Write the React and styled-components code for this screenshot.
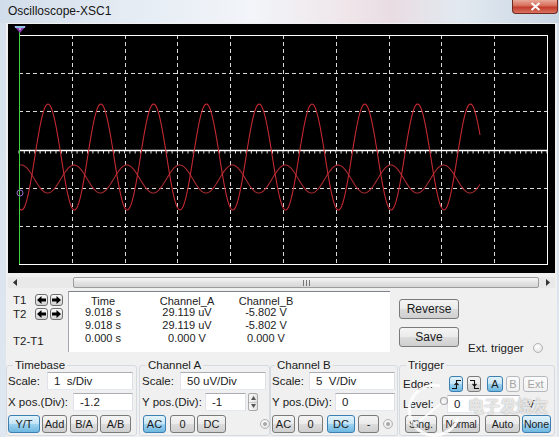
import React from 'react';
import styled, { createGlobalStyle } from 'styled-components';

const Global = createGlobalStyle`
  html, body { margin:0; padding:0; background:#fff; }
  * { box-sizing:border-box; }
`;

const Window = styled.div`
  width:559px; height:444px; background:#fff; overflow:hidden;
  font-family:'Liberation Sans', Arial, sans-serif; color:#1b1b1b; font-size:11.5px;
`;
const Frame = styled.div`
  height:437px; display:flex; flex-direction:column;
  background:linear-gradient(180deg,#d6e1ed 0%,#dfe7f0 100%);
`;
const TitleBar = styled.div`
  height:23px; flex:none; display:flex; align-items:flex-start; justify-content:space-between;
  padding-left:8px;
  background:linear-gradient(90deg,#d1ddea 0%,#e4ebf3 22%,#f2f5f9 45%,#efe6ea 62%,#e9dde3 70%,#e2e9f0 82%,#c9d6e3 100%);
`;
const Title = styled.span` font-size:12px; line-height:22px; color:#151515; `;
const Close = styled.div`
  width:46px; height:14px; margin-right:1px; display:grid; place-items:center;
  border:1px solid #6d2b22; border-top:none; border-radius:0 0 4px 4px;
  background:linear-gradient(#e9a898 0%,#d66c58 45%,#c23b2b 55%,#d9735f 100%);
`;
const Body = styled.div` flex:1; display:flex; padding:0 2px 0 6px; min-height:0; `;
const Panel = styled.div` flex:1; background:#f0f0f0; display:flex; flex-direction:column; min-width:0; `;
const Screen = styled.div` height:249px; margin:1px 2px 0; background:#000; flex:none; line-height:0; `;

const Scroll = styled.div`
  height:11px; margin:4px 2px 0; flex:none; display:flex; align-items:stretch;
  background:#e9e9e9;
`;
const ScrollArrow = styled.div` width:14px; display:grid; place-items:center; `;
const Track = styled.div` flex:1; display:flex; `;
const Thumb = styled.div`
  flex:1; margin:0 2px 0 51px; display:grid; place-items:center;
  border:1px solid #9c9c9c; border-radius:2px;
  background:linear-gradient(#f6f6f6,#e2e2e2 55%,#d6d6d6);
`;

const Readout = styled.div` height:62px; margin-top:2px; flex:none; display:flex; `;
const Cursors = styled.div` width:62px; padding:3px 0 0 7px; `;
const CurRow = styled.div` height:14px; display:flex; align-items:center; margin-top:${p=>p.$mt||0}px; `;
const CurLabel = styled.span` width:22px; flex:none; white-space:nowrap; font-size:11.5px; `;
const ArrowBtn = styled.div`
  width:13px; height:12px; margin-right:2px; display:grid; place-items:center;
  border:1px solid #6f6f6f; border-radius:3px;
  background:linear-gradient(#fafafa,#e6e6e6 50%,#d2d2d2);
`;
const Table = styled.div`
  width:322px; height:61px; margin-top:1px; background:#fff;
  border-top:1px solid #7f848c; border-left:1px solid #a3a7ad;
  padding-top:3px; display:grid; grid-template-columns:68px 100px 58px; grid-template-rows:11px 13px 13px 13px;
  font-size:11px; line-height:12px; text-align:center; color:#222;
`;
const SideBtns = styled.div` width:60px; margin-left:9px; display:flex; flex-direction:column; `;
const Btn = styled.div`
  width:${p=>p.$w}px; height:${p=>p.$h||18}px; margin-top:${p=>p.$mt||0}px; margin-left:${p=>p.$ml||0}px;
  display:grid; place-items:center; flex:none; white-space:nowrap; overflow:hidden;
  font-size:${p=>p.$fs||11}px; letter-spacing:${p=>p.$ls||0}px; color:${p=>p.$off?'#a3a3a3':'#1b1b1b'};
  border:1px solid ${p=>p.$on?'#3c7fb1':p.$off?'#b5b9bd':'#7a7a7a'}; border-radius:3px;
  background:${p=>p.$on
    ?'linear-gradient(#e4f3fb,#c4e4f6 48%,#9dd2f0 52%,#6fb8e0)'
    :p.$off?'linear-gradient(#fbfbfb,#f1f1f1)'
    :'linear-gradient(#f4f4f4,#ebebeb 48%,#dcdcdc 52%,#cfcfcf)'};
`;
const ExtTrig = styled.div`
  align-self:flex-end; margin:0 0 -3px 9px; display:flex; align-items:center; gap:9px;
  font-size:11.5px; line-height:14px;
`;
const Radio = styled.span`
  width:10px; height:10px; border-radius:50%; flex:none; display:grid; place-items:center;
  margin-left:${p=>p.$ml||0}px;
  border:1px solid #b3b3b3; background:radial-gradient(circle at 40% 35%,#ffffff,#dcdcdc);
  &::after{ content:''; width:4px; height:4px; border-radius:50%; background:${p=>p.$dot?'#a8a8a8':'transparent'}; }
`;

const Controls = styled.div` margin-top:6px; display:flex; flex:none; `;
const Group = styled.fieldset`
  position:relative; margin:0 0 0 ${p=>p.$ml||0}px; width:${p=>p.$w}px; min-width:0;
  padding:0 0 2px ${p=>p.$pl}px;
  border:1px solid #d5dbe1; border-radius:3px;
`;
const Legend = styled.legend`
  padding:0 2px; margin-left:${p=>p.$ml}px; font-size:11.5px; line-height:14px; color:#1b1b1b;
`;
const Row = styled.div` height:18px; display:flex; align-items:center; margin-top:${p=>p.$mt||0}px; `;
const Label = styled.span` width:${p=>p.$w}px; flex:none; white-space:nowrap; `;
const Field = styled.div`
  width:${p=>p.$w}px; height:18px; flex:none; padding-left:6px; line-height:16px;
  background:#fff; border:1px solid; border-color:#abadb3 #dbdfe6 #e3e9ef #e2e3ea;
`;
const Spin = styled.div`
  width:10px; height:18px; margin-left:2px; display:flex; flex-direction:column;
  border:1px solid #a9a9a9; border-radius:2px; background:linear-gradient(90deg,#f7f7f7,#e3e3e3);
  & > span{ flex:1; display:grid; place-items:center; }
  & > span + span{ border-top:1px solid #c4c4c4; }
`;
const Unit = styled.span` margin-left:7px; `;

const Watermark = styled.div`
  position:absolute; left:0; top:10px; width:154px; height:56px; pointer-events:none;
  color:rgba(255,255,255,.75);
`;
const WmText = styled.div`
  position:absolute; left:68px; top:12px; font-family:'Noto Sans CJK SC', sans-serif;
  font-size:16px; font-weight:700; line-height:22px; white-space:nowrap;
  text-shadow:0 0 1px rgba(90,90,90,.5), 0 0 2px rgba(120,120,120,.3);
`;

// ---- screen drawing ----
const GX = 11, GY = 11, GW = 528, GH = 229, DIV = 52.8;
function wave(center, amp, peakX, x0, x1){
  let d = '';
  for(let x = x0; x <= x1; x += 1){
    const y = center - amp*Math.cos(2*Math.PI*(x-peakX)/DIV);
    d += (x===x0?'M':'L') + x + ' ' + y.toFixed(2) + ' ';
  }
  return d;
}

function Scope(){
  const vx = Array.from({length:9},(_,i)=>Math.round(GX+DIV*(i+1))+0.5);
  const hy = [1,2,4,5].map(i=>Math.round(GY+GH/6*i)+0.5);
  const cy = Math.round(GY+GH/2)+0.5;
  const ticks = Array.from({length:101},(_,i)=>GX+i*DIV/10);
  return (
    <svg width="547" height="249" viewBox="0 0 547 249">
      <rect width="547" height="249" fill="#000"/>
      {vx.map(x=><line key={'v'+x} x1={x} y1={GY} x2={x} y2={GY+GH} stroke="#d9d9d9" strokeDasharray="4 3"/>)}
      {hy.map(y=><line key={'h'+y} x1={GX} y1={y} x2={GX+GW} y2={y} stroke="#d9d9d9" strokeDasharray="4 3"/>)}
      <line x1={GX} y1={cy} x2={GX+GW} y2={cy} stroke="#fff" strokeWidth="1.6"/>
      {ticks.map((x,i)=><line key={'t'+i} x1={x} y1={cy} x2={x} y2={cy+3} stroke="#eee" strokeWidth="1"/>)}
      <rect x={GX+0.5} y={GY+0.5} width={GW} height={GH} fill="none" stroke="#fff"/>
      <path d={wave(155,14,66,12,472)} fill="none" stroke="#a92a30" strokeWidth="1.1"/>
      <path d={wave(133,53,40,12,472)} fill="none" stroke="#c42a31" strokeWidth="1.1"/>
      <line x1="11.5" y1="6" x2="11.5" y2={GY+GH} stroke="#3fd13f"/>
      <circle cx="12" cy="169" r="3" fill="none" stroke="#9d6cc9" strokeWidth="1"/>
      <polygon points="6,2 18,2 12,9" fill="#8a3db0"/>
      <rect x="7" y="2" width="10" height="2" fill="#8fc3ea"/>
      <rect x="11" y="4.5" width="2" height="1" fill="#fff"/>
    </svg>
  );
}

const LeftArrow = () => (
  <svg width="9" height="8" viewBox="0 0 9 8"><polygon points="0,4 4.5,0 4.5,2.5 9,2.5 9,5.5 4.5,5.5 4.5,8" fill="#000"/></svg>
);
const RightArrow = () => (
  <svg width="9" height="8" viewBox="0 0 9 8"><polygon points="9,4 4.5,0 4.5,2.5 0,2.5 0,5.5 4.5,5.5 4.5,8" fill="#000"/></svg>
);
const Rising = () => (
  <svg width="11" height="11" viewBox="0 0 11 11"><path d="M1 9.5H5.5V1.5H10M3.5 6L5.5 4L7.5 6" fill="none" stroke="#111" strokeWidth="1.1"/></svg>
);
const Falling = () => (
  <svg width="11" height="11" viewBox="0 0 11 11"><path d="M1 1.5H5.5V9.5H10M3.5 5L5.5 7L7.5 5" fill="none" stroke="#111" strokeWidth="1.1"/></svg>
);
const Tri = ({dir}) => (
  <svg width="5" height="4" viewBox="0 0 5 4"><polygon points={dir==='up'?'0,4 2.5,0 5,4':'0,0 5,0 2.5,4'} fill="#555"/></svg>
);

const rows = [
  ['Time','Channel_A','Channel_B'],
  ['9.018 s','29.119 uV','-5.802 V'],
  ['9.018 s','29.119 uV','-5.802 V'],
  ['0.000 s','0.000 V','0.000 V'],
];

export default function App(){
  return (
    <Window>
      <Global/>
      <Frame>
        <TitleBar>
          <Title>Oscilloscope-XSC1</Title>
          <Close>
            <svg width="11" height="9" viewBox="0 0 11 9"><path d="M1.5 1L9.5 8M9.5 1L1.5 8" stroke="#fff" strokeWidth="2"/></svg>
          </Close>
        </TitleBar>
        <Body>
          <Panel>
            <Screen><Scope/></Screen>
            <Scroll>
              <ScrollArrow><svg width="4" height="7" viewBox="0 0 4 7"><polygon points="4,0 0,3.5 4,7" fill="#333"/></svg></ScrollArrow>
              <Track>
                <Thumb>
                  <svg width="7" height="6" viewBox="0 0 7 6"><path d="M0.5 0V6M3.5 0V6M6.5 0V6" stroke="#777"/></svg>
                </Thumb>
              </Track>
              <ScrollArrow><svg width="4" height="7" viewBox="0 0 4 7"><polygon points="0,0 4,3.5 0,7" fill="#333"/></svg></ScrollArrow>
            </Scroll>

            <Readout>
              <Cursors>
                <CurRow><CurLabel>T1</CurLabel><ArrowBtn><LeftArrow/></ArrowBtn><ArrowBtn><RightArrow/></ArrowBtn></CurRow>
                <CurRow><CurLabel>T2</CurLabel><ArrowBtn><LeftArrow/></ArrowBtn><ArrowBtn><RightArrow/></ArrowBtn></CurRow>
                <CurRow $mt={13}><CurLabel>T2-T1</CurLabel></CurRow>
              </Cursors>
              <Table>
                {rows.flat().map((t,i)=><span key={i}>{t}</span>)}
              </Table>
              <SideBtns>
                <Btn $w={60} $h={20} $mt={9} $fs={12}>Reverse</Btn>
                <Btn $w={60} $h={20} $mt={8} $fs={12}>Save</Btn>
              </SideBtns>
              <ExtTrig>Ext. trigger <Radio/></ExtTrig>
            </Readout>

            <Controls>
              <Group $w={131} $pl={1}>
                <Legend $ml={5}>Timebase</Legend>
                <Row><Label $w={39}>Scale:</Label><Field $w={86}>1&nbsp; s/Div</Field></Row>
                <Row $mt={3}><Label $w={65}>X pos.(Div):</Label><Field $w={60}>-1.2</Field></Row>
                <Row $mt={4}>
                  <Btn $w={32} $on>Y/T</Btn>
                  <Btn $w={25} $ml={2}>Add</Btn>
                  <Btn $w={28} $ml={3}>B/A</Btn>
                  <Btn $w={31} $ml={2}>A/B</Btn>
                </Row>
              </Group>
              <Group $w={131} $ml={2} $pl={2}>
                <Legend $ml={4}>Channel A</Legend>
                <Row><Label $w={38}>Scale:</Label><Field $w={86}>50 uV/Div</Field></Row>
                <Row $mt={3}>
                  <Label $w={63}>Y pos.(Div):</Label><Field $w={41}>-1</Field>
                  <Spin><span><Tri dir="up"/></span><span><Tri dir="down"/></span></Spin>
                </Row>
                <Row $mt={4}>
                  <Btn $w={23} $ml={1} $on>AC</Btn>
                  <Btn $w={25} $ml={4}>0</Btn>
                  <Btn $w={29} $ml={2}>DC</Btn>
                  <Radio $ml={34} $dot/>
                </Row>
              </Group>
              <Group $w={128} $pl={1}>
                <Legend $ml={3}>Channel B</Legend>
                <Row><Label $w={37}>Scale:</Label><Field $w={86}>5&nbsp; V/Div</Field></Row>
                <Row $mt={3}><Label $w={63}>Y pos.(Div):</Label><Field $w={60}>0</Field></Row>
                <Row $mt={4}>
                  <Btn $w={23}>AC</Btn>
                  <Btn $w={25} $ml={3}>0</Btn>
                  <Btn $w={28} $ml={4} $on>DC</Btn>
                  <Btn $w={21} $ml={3}>-</Btn>
                  <Radio $ml={4} $dot/>
                </Row>
              </Group>
              <Group $w={156} $ml={1} $pl={3}>
                <Legend $ml={3}>Trigger</Legend>
                <Row $mt={3}>
                  <Label $w={46}>Edge:</Label>
                  <Btn $w={14} $h={16} $on><Rising/></Btn>
                  <Btn $w={14} $h={16} $ml={4}><Falling/></Btn>
                  <Btn $w={16} $h={16} $ml={6} $on>A</Btn>
                  <Btn $w={14} $h={16} $ml={3} $off>B</Btn>
                  <Btn $w={25} $h={16} $ml={3} $off>Ext</Btn>
                </Row>
                <Row $mt={2}><Label $w={44}>Level:</Label><Field $w={73}>0</Field><Unit>V</Unit></Row>
                <Row $mt={2}>
                  <Btn $w={32} $ml={2} $fs={10.5}>Sing.</Btn>
                  <Btn $w={38} $ml={5} $fs={10} $ls={-0.2}>Normal</Btn>
                  <Btn $w={35} $ml={5} $fs={10.5}>Auto</Btn>
                  <Btn $w={29} $ml={2} $fs={10.5} $on>None</Btn>
                </Row>
                <Watermark>
                  <svg width="64" height="56" viewBox="0 0 64 56" style={{position:'absolute',left:0,top:0}}>
                    <path d="M40 4 A25 25 0 1 0 58 36" fill="none" stroke="rgba(255,255,255,.85)" strokeWidth="3"/>
                    <path d="M16 42 L44 19" stroke="rgba(255,255,255,.85)" strokeWidth="2"/>
                    <circle cx="16" cy="42" r="3.5" fill="none" stroke="rgba(120,120,120,.6)" strokeWidth="1.2"/>
                    <circle cx="44" cy="19" r="3.5" fill="none" stroke="rgba(120,120,120,.6)" strokeWidth="1.2"/>
                  </svg>
                  <WmText>电子发烧友</WmText>
                </Watermark>
              </Group>
            </Controls>
          </Panel>
        </Body>
      </Frame>
    </Window>
  );
}
